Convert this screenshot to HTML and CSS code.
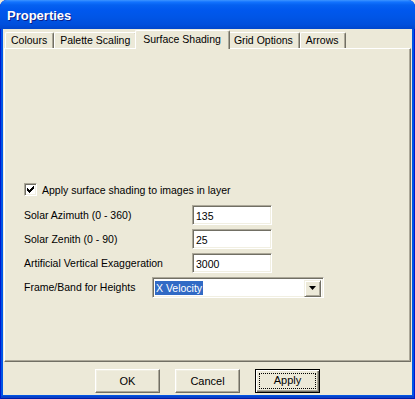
FILE: index.html
```html
<!DOCTYPE html>
<html lang="en">
<head>
    <meta charset="UTF-8">
    <title>Properties</title>
    <link rel="stylesheet" href="styles.css">
</head>
<body>
    <div class="window">
        <div class="titlebar">Properties</div>

        <div class="client">
            <div class="tabs">
                <div class="tab">Colours</div>
                <div class="tab">Palette Scaling</div>
                <div class="tab active">Surface Shading</div>
                <div class="tab">Grid Options</div>
                <div class="tab">Arrows</div>
            </div>

            <div class="panel">
                <label class="check-row">
                    <span class="checkbox">
                        <svg width="7" height="7" viewBox="0 0 7 7">
                            <path d="M0 2h1v1h1v1h1v-1h1v-1h1v-1h1v-1h1v3h-1v1h-1v1h-1v1h-1v1h-1v-1h-1v-1h-1z" fill="#000"/>
                        </svg>
                    </span>
                    Apply surface shading to images in layer
                </label>

                <div class="row">
                    <span class="label">Solar Azimuth (0 - 360)</span>
                    <span class="field">135</span>
                </div>
                <div class="row">
                    <span class="label">Solar Zenith (0 - 90)</span>
                    <span class="field">25</span>
                </div>
                <div class="row">
                    <span class="label">Artificial Vertical Exaggeration</span>
                    <span class="field">3000</span>
                </div>
                <div class="row">
                    <span class="label short">Frame/Band for Heights</span>
                    <span class="combo">
                        <span class="combo-value"><span class="selected">X Velocity</span></span>
                        <span class="combo-button">
                            <svg width="7" height="4" viewBox="0 0 7 4">
                                <path d="M0 0h7l-3.5 4z" fill="#000"/>
                            </svg>
                        </span>
                    </span>
                </div>
            </div>

            <div class="buttons">
                <button class="btn">OK</button>
                <button class="btn">Cancel</button>
                <button class="btn default"><span class="focus">Apply</span></button>
            </div>
        </div>
    </div>
</body>
</html>
```

FILE: styles.css
```css
* {
    margin: 0;
    padding: 0;
    box-sizing: border-box;
}
body {
    font-family: 'Liberation Sans', Arial, sans-serif;
    font-size: 10.5px;
    color: #000;
    background-color: #ece9d8;
}
.window {
    width: 415px;
    height: 399px;
    display: flex;
    flex-direction: column;
    padding: 0 3px 4px;
    background-color: #0055e5;
    border-radius: 7px 7px 0 0;
    box-shadow: inset 1px 0 #0019cf, inset -1px 0 #0019cf, inset 0 -1px #001ba8, inset 0 -3px #0842c8;
}
.titlebar {
    height: 29px;
    margin: 0 -3px;
    padding: 2px 0 0 7px;
    line-height: 27px;
    font-size: 13px;
    font-weight: bold;
    color: #fff;
    text-shadow: 1px 1px #0a1e8a;
    border-radius: 7px 7px 0 0;
    background: linear-gradient(#3d95ff 0, #1273ff 2px, #0561f0 5px, #0058ee 10px, #0055e6 60%, #004fdc 85%, #0046cc 100%);
}
.client {
    flex: 1;
    display: flex;
    flex-direction: column;
    padding-top: 1px;
    background-color: #ece9d8;
}
.tabs {
    display: flex;
    align-items: flex-end;
    height: 18px;
    padding-left: 2px;
}
.tab {
    height: 16px;
    padding: 0 6px 0 5px;
    line-height: 15px;
    white-space: nowrap;
    border-top: 1px solid #fff;
    border-left: 1px solid #fff;
    border-right: 1px solid #716f64;
    border-radius: 2px 2px 0 0;
    box-shadow: inset -1px 0 #aca899;
    background-color: #ece9d8;
}
.tab.active {
    position: relative;
    z-index: 1;
    height: 19px;
    margin: 0 -2px -1px;
    padding: 0 8px 0 7px;
    line-height: 16px;
}
.panel {
    flex: 1;
    margin: 0 1px;
    padding: 134px 0 0 19px;
    border: 1px solid;
    border-color: #fff #716f64 #716f64 #fff;
    box-shadow: inset -1px -1px #aca899;
}
.check-row {
    display: flex;
    align-items: center;
    gap: 5px;
    height: 13px;
    margin-bottom: 9px;
}
.checkbox {
    width: 13px;
    height: 13px;
    display: flex;
    align-items: center;
    justify-content: center;
    background-color: #fff;
    border: 1px solid;
    border-color: #aca899 #fff #fff #aca899;
    box-shadow: inset 1px 1px #716f64, inset -1px -1px #f1efe2;
}
.row {
    display: flex;
    align-items: center;
    height: 20px;
    margin-bottom: 4px;
}
.label {
    width: 168px;
}
.label.short {
    width: 128px;
}
.field {
    width: 80px;
    height: 20px;
    padding: 2px 3px;
    line-height: 16px;
    background-color: #fff;
    border: 1px solid;
    border-color: #aca899 #fff #fff #aca899;
    box-shadow: inset 1px 1px #716f64, inset -1px -1px #f1efe2;
}
.combo {
    width: 172px;
    height: 21px;
    display: flex;
    justify-content: space-between;
    padding: 2px;
    background-color: #fff;
    border: 1px solid;
    border-color: #aca899 #fff #fff #aca899;
    box-shadow: inset 1px 1px #716f64, inset -1px -1px #f1efe2;
}
.combo-value {
    padding-top: 1px;
}
.selected {
    display: inline-block;
    height: 14px;
    padding: 0 1px;
    line-height: 14px;
    color: #fff;
    background-color: #316ac5;
}
.combo-button {
    width: 17px;
    height: 17px;
    display: flex;
    align-items: center;
    justify-content: center;
    background-color: #ece9d8;
    border: 1px solid;
    border-color: #f1efe2 #716f64 #716f64 #f1efe2;
    box-shadow: inset 1px 1px #fff, inset -1px -1px #aca899;
}
.buttons {
    height: 33px;
    display: flex;
    justify-content: center;
    gap: 15px;
    padding-top: 7px;
}
.btn {
    width: 65px;
    height: 24px;
    font-family: inherit;
    font-size: 11px;
    color: #000;
    background-color: #ece9d8;
    border: 1px solid;
    border-color: #fff #716f64 #716f64 #fff;
    box-shadow: inset -1px -1px #aca899, inset 1px 1px #f1efe2;
}
.btn.default {
    display: flex;
    padding: 3px;
    border-color: #000;
    box-shadow: inset 1px 1px #fff, inset -1px -1px #716f64, inset -2px -2px #aca899;
}
.focus {
    flex: 1;
    line-height: 14px;
    outline: 1px dotted #000;
    outline-offset: -1px;
}
```
